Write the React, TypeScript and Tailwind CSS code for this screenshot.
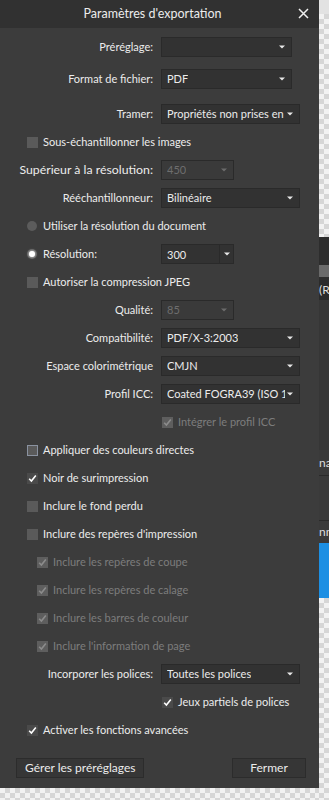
import type { ReactNode } from 'react'

const font = "font-['Segoe_UI','Lato',sans-serif]"

const checker =
  'bg-[#efefef] bg-[image:repeating-conic-gradient(#d6d6d6_0%_25%,#f2f2f2_0%_50%)] bg-[length:10px_10px]'

function Arrow({ dim }: { dim?: boolean }) {
  return (
    <svg width="6" height="4" viewBox="0 0 6 4" className="shrink-0">
      <path d="M0 0.5h6L3 3.5z" fill={dim ? '#6b6b6b' : '#e8e8e8'} />
    </svg>
  )
}

function Select({ value, width, disabled }: { value?: string; width: string; disabled?: boolean }) {
  return (
    <div
      className={`flex h-[20px] items-center justify-between gap-[2px] border border-[#2a2a2a] pl-[5px] pr-[6px] ${width} ${
        disabled ? 'bg-[#3a3a3a] text-[#6e6e6e]' : 'bg-[#323232] text-[#ececec]'
      }`}
    >
      <span className="overflow-hidden whitespace-nowrap">{value}</span>
      <Arrow dim={disabled} />
    </div>
  )
}

function Check({ checked, disabled, focus }: { checked?: boolean; disabled?: boolean; focus?: boolean }) {
  return (
    <span
      className={`flex size-[11px] shrink-0 items-center justify-center ${
        disabled ? 'bg-[#5e5e5e]' : checked ? 'bg-[#4a4a4a]' : 'bg-[#5a5a5a]'
      } ${focus ? 'border border-[#8a92a0] bg-[#4c4c4c]' : ''}`}
    >
      {checked && (
        <svg width="9" height="9" viewBox="0 0 9 9">
          <path
            d="M1.2 4.8 3.4 7 7.8 1.6"
            fill="none"
            stroke={disabled ? '#8c8c8c' : '#ffffff'}
            strokeWidth="1.6"
          />
        </svg>
      )}
    </span>
  )
}

function CheckRow({
  label,
  checked,
  disabled,
  focus,
  indent = 'pl-[27px]',
}: {
  label: string
  checked?: boolean
  disabled?: boolean
  focus?: boolean
  indent?: string
}) {
  return (
    <div className={`flex h-[28px] items-center gap-[5px] ${indent}`}>
      <Check checked={checked} disabled={disabled} focus={focus} />
      <span className={disabled ? 'text-[#7c7c7c]' : 'text-[#ececec]'}>{label}</span>
    </div>
  )
}

function FieldRow({ label, children, big }: { label: string; children: ReactNode; big?: boolean }) {
  return (
    <div className="flex h-[28px] items-center">
      <div className={`w-[153px] whitespace-nowrap text-right ${big ? 'text-[12.3px]' : ''}`}>{label}</div>
      <div className="ml-[8px]">{children}</div>
    </div>
  )
}

function Radio({ label, on }: { label: string; on?: boolean }) {
  return (
    <div className="flex items-center gap-[6px] pl-[27px]">
      <span className="flex size-[10px] items-center justify-center rounded-full bg-[#5c5c5c]">
        {on && <span className="size-[6px] rounded-full bg-white shadow-[0_0_3px_#ffffff]" />}
      </span>
      <span>{label}</span>
    </div>
  )
}

function BackStrip() {
  return (
    <div className="flex w-[10px] flex-col text-[12px] leading-none text-[#dddddd]">
      <div className="h-[14px] bg-[#e2e2e2]" />
      <div className={`h-[223px] ${checker}`} />
      <div className="h-[25px] bg-[#2d2d2d]" />
      <div className="h-[18px] bg-[#2d2d2d] py-[3px]">
        <div className="h-full bg-[#6a6a6a]" />
      </div>
      <div className="h-[20px] bg-[#2b2b2b] pt-[4px]">(R</div>
      <div className="h-[150px] bg-[#363636]" />
      <div className="flex h-[25px] items-center bg-[#3a3a3a]">na</div>
      <div className="h-[45px] border-t border-[#2a2a2a] bg-[#3a3a3a]" />
      <div className="flex h-[23px] items-center border-t border-[#2a2a2a] bg-[#3a3a3a]">nn</div>
      <div className="h-[55px] bg-[#1c8fe3]" />
      <div className={`flex-1 ${checker}`} />
    </div>
  )
}

export default function App() {
  return (
    <div className={`flex h-[800px] w-[329px] overflow-hidden bg-[#efefef] text-[11px] ${font}`}>
      <div className="flex w-[319px] flex-col">
        <div className="flex flex-col bg-[#3c3c3c] pb-[10px] text-[#ececec] shadow-[2px_2px_4px_rgba(0,0,0,0.35)]">
          {/* title */}
          <div className="relative flex h-[28px] items-center justify-center bg-[#313131] text-[12.5px]">
            <span className="-ml-[14px]">Paramètres d'exportation</span>
            <svg width="11" height="11" viewBox="0 0 11 11" className="absolute right-[10px] top-[8px]">
              <path d="M1 1l9 9M10 1l-9 9" stroke="#f0f0f0" strokeWidth="1.5" />
            </svg>
          </div>

          <div className="mt-[5px]">
            <FieldRow label="Préréglage:">
              <Select width="w-[131px]" />
            </FieldRow>
          </div>
          <div className="mt-[4px]">
            <FieldRow label="Format de fichier:">
              <Select value="PDF" width="w-[131px]" />
            </FieldRow>
          </div>
          <div className="mt-[7px]">
            <FieldRow label="Tramer:">
              <Select value="Propriétés non prises en ·" width="w-[139px]" />
            </FieldRow>
          </div>
          <CheckRow label="Sous-échantillonner les images" />
          <FieldRow label="Supérieur à la résolution:" big>
            <Select value="450" width="w-[73px]" disabled />
          </FieldRow>
          <FieldRow label="Rééchantillonneur:">
            <Select value="Bilinéaire" width="w-[139px]" />
          </FieldRow>
          <div className="flex h-[28px] items-center">
            <Radio label="Utiliser la résolution du document" />
          </div>
          <div className="flex h-[28px] items-center">
            <div className="w-[161px]">
              <Radio label="Résolution:" on />
            </div>
            <div className="flex h-[20px] w-[73px] border border-[#2a2a2a] bg-[#323232]">
              <span className="flex-1 pl-[5px] leading-[19px]">300</span>
              <span className="flex w-[14px] items-center justify-center border-l border-[#2a2a2a]">
                <Arrow />
              </span>
            </div>
          </div>
          <CheckRow label="Autoriser la compression JPEG" />
          <FieldRow label="Qualité:">
            <Select value="85" width="w-[73px]" disabled />
          </FieldRow>
          <FieldRow label="Compatibilité:">
            <Select value="PDF/X-3:2003" width="w-[139px]" />
          </FieldRow>
          <FieldRow label="Espace colorimétrique">
            <Select value="CMJN" width="w-[139px]" />
          </FieldRow>
          <FieldRow label="Profil ICC:">
            <Select value="Coated FOGRA39 (ISO 12" width="w-[139px]" />
          </FieldRow>
          <CheckRow label="Intégrer le profil ICC" checked disabled indent="pl-[162px]" />
          <CheckRow label="Appliquer des couleurs directes" focus />
          <CheckRow label="Noir de surimpression" checked />
          <CheckRow label="Inclure le fond perdu" />
          <CheckRow label="Inclure des repères d'impression" />
          <CheckRow label="Inclure les repères de coupe" checked disabled indent="pl-[37px]" />
          <CheckRow label="Inclure les repères de calage" checked disabled indent="pl-[37px]" />
          <CheckRow label="Inclure les barres de couleur" checked disabled indent="pl-[37px]" />
          <CheckRow label="Inclure l'information de page" checked disabled indent="pl-[37px]" />
          <FieldRow label="Incorporer les polices:">
            <Select value="Toutes les polices" width="w-[139px]" />
          </FieldRow>
          <CheckRow label="Jeux partiels de polices" checked indent="pl-[162px]" />
          <CheckRow label="Activer les fonctions avancées" checked />

          <div className="mt-[14px] flex items-center justify-between pl-[16px] pr-[13px]">
            <button className="h-[20px] border border-[#2c2c2c] bg-[#363636] px-[8px] text-[12px] text-[#ececec]">
              Gérer les préréglages
            </button>
            <button className="h-[20px] w-[74px] border border-[#2c2c2c] bg-[#363636] text-[12px] text-[#ececec]">
              Fermer
            </button>
          </div>
        </div>
        <div className={`flex-1 ${checker}`} />
      </div>
      <BackStrip />
    </div>
  )
}
